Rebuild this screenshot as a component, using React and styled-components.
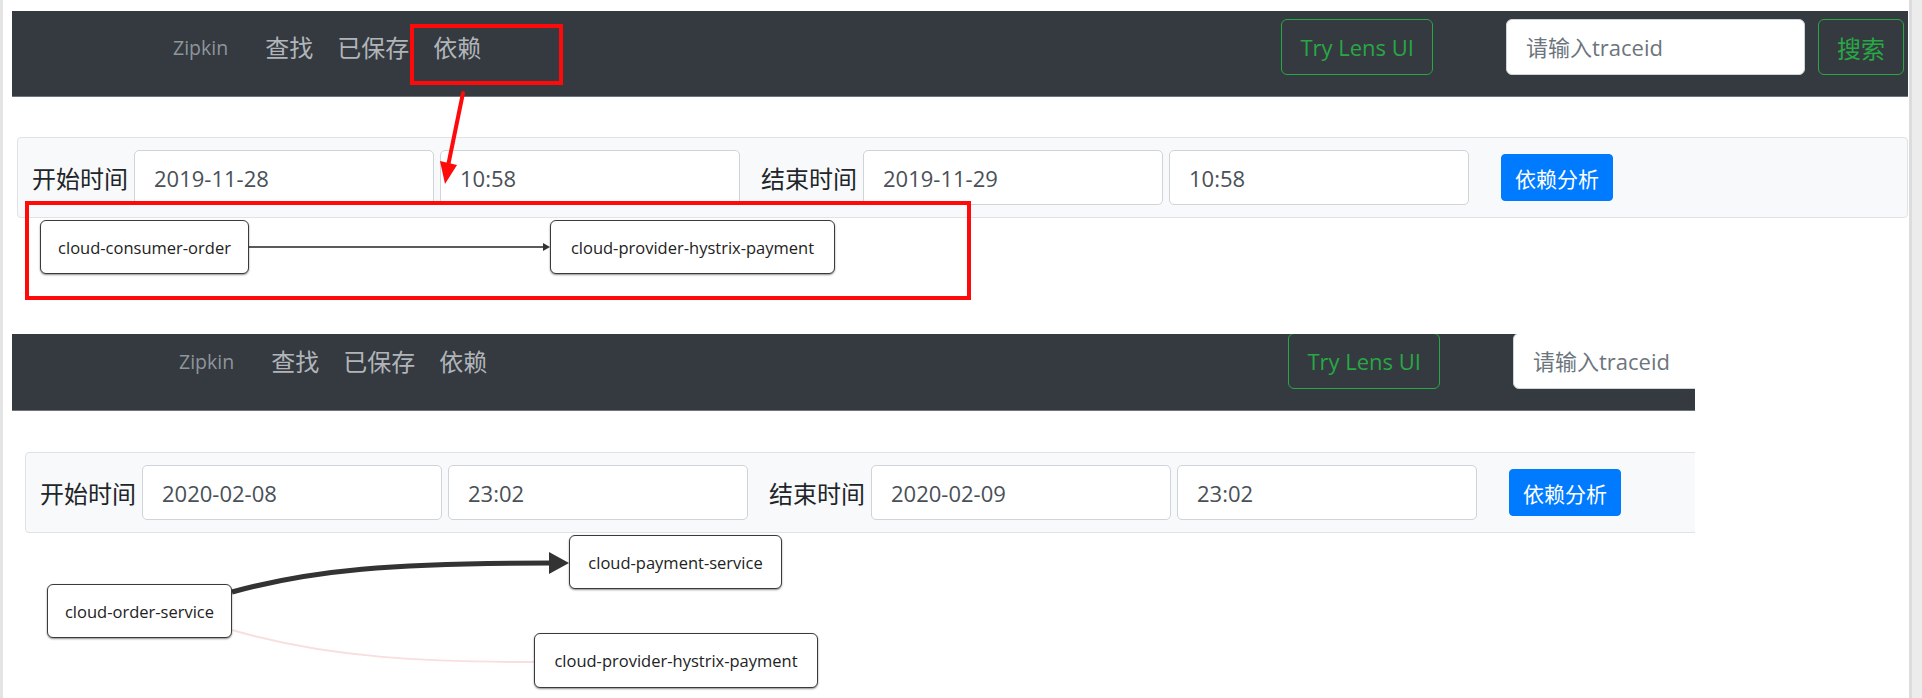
import React from 'react';
import styled, { createGlobalStyle } from 'styled-components';

const GlobalStyle = createGlobalStyle`
  html, body { margin: 0; padding: 0; background: #fff; }
  body { font-family: "Open Sans", "Noto Sans CJK SC", sans-serif; overflow: hidden; }
  *, *::before, *::after { box-sizing: border-box; }
`;

const Page = styled.div`
  position: relative;
  display: flex;
  width: 1922px;
  height: 698px;
  overflow: hidden;
  background: #fff;
`;

const Main = styled.main`
  flex: 0 0 1909px;
  display: flex;
  flex-direction: column;
  border-left: 3px solid #e4e4e4;
`;

const ScrollStrip = styled.div`
  flex: 1;
  background: #ececec;
  border-left: 3px solid #dcdcdc;
`;

const Capture = styled.section`
  display: flex;
  flex-direction: column;
  flex-shrink: 0;
  overflow: hidden;
  width: ${p => p.$width}px;
  padding: ${p => p.$pad};
  margin-left: ${p => p.$ml || 0}px;
`;

const Navbar = styled.nav`
  flex-shrink: 0;
  display: flex;
  align-items: center;
  width: ${p => p.$width}px;
  height: 86px;
  margin-top: ${p => -(p.$cropTop || 0)}px;
  padding: 8px 4px 21px ${p => p.$padLeft}px;
  background: #343a40;
  border-bottom: 1px solid #6c757d;
`;

const Brand = styled.a`
  margin-right: 37px;
  font-family: "Open Sans", sans-serif;
  font-size: 19.5px;
  color: #8e959c;
  text-decoration: none;
`;

const NavLinks = styled.div`
  display: flex;
  gap: 24px;
`;

const NavLink = styled.a`
  font-family: "Noto Sans CJK SC", sans-serif;
  font-size: 24px;
  line-height: 1;
  color: #b1b5b9;
  text-decoration: none;
`;

const RightGroup = styled.div`
  display: flex;
  align-items: center;
  margin-left: auto;
`;

const OutlineButton = styled.button`
  height: 56px;
  margin-right: ${p => p.$mr || 0}px;
  padding: 0 18px;
  background: transparent;
  border: 1.5px solid #28a745;
  border-radius: 6px;
  color: #28a745;
  font-family: "Open Sans", "Noto Sans CJK SC", sans-serif;
  font-size: ${p => p.$fs || 22}px;
  white-space: nowrap;
`;

const SearchInput = styled.input`
  width: 299px;
  height: 56px;
  margin-right: 13px;
  padding: 0 0 0 19px;
  background: #fff;
  border: 1px solid #ced4da;
  border-radius: 6px;
  font-family: "Open Sans", "Noto Sans CJK SC", sans-serif;
  font-size: 22px;
  color: #495057;
  &::placeholder { color: #6c757d; }
`;

const FilterPanel = styled.form`
  flex-shrink: 0;
  display: flex;
  align-items: center;
  width: 1891px;
  margin: ${p => p.$mt}px 0 0 ${p => p.$ml}px;
  padding: 12px 14px;
  background: #f8f9fa;
  border: 1px solid #dfe2e6;
  border-radius: 4px;
`;

const FieldGroup = styled.div`
  display: flex;
  align-items: center;
  gap: 6px;
  margin-right: ${p => p.$mr || 0}px;
`;

const FieldLabel = styled.label`
  font-family: "Noto Sans CJK SC", sans-serif;
  font-size: 24px;
  color: #212529;
  white-space: nowrap;
`;

const TextInput = styled.input`
  width: 300px;
  height: 55px;
  padding: 0 0 0 19px;
  background: #fff;
  border: 1px solid #ced4da;
  border-radius: 5px;
  font-family: "Open Sans", sans-serif;
  font-size: 22px;
  color: #495057;
`;

const PrimaryButton = styled.button`
  width: 112px;
  height: 47px;
  margin-left: 10px;
  padding: 0;
  background: #007bff;
  border: 1px solid #007bff;
  border-radius: 4px;
  color: #fff;
  font-family: "Noto Sans CJK SC", sans-serif;
  font-size: 21px;
`;

const Canvas = styled.div`
  position: relative;
  flex-shrink: 0;
  height: ${p => p.$h}px;
`;

const EdgeLayer = styled.svg`
  position: absolute;
  left: 0;
  top: 0;
  overflow: visible;
`;

const ServiceNode = styled.div`
  position: absolute;
  left: ${p => p.$x}px;
  top: ${p => p.$y}px;
  width: ${p => p.$w}px;
  height: ${p => p.$h}px;
  display: flex;
  align-items: center;
  justify-content: center;
  background: #fff;
  border: 1px solid #3a3a3a;
  border-radius: 6px;
  box-shadow: 0 1px 2px rgba(0, 0, 0, 0.45);
  font-family: "Open Sans", sans-serif;
  font-size: 16.5px;
  color: #222;
  white-space: nowrap;
`;

const RedBox = styled.div`
  position: absolute;
  left: ${p => p.$x}px;
  top: ${p => p.$y}px;
  width: ${p => p.$w}px;
  height: ${p => p.$h}px;
  border: 4px solid #ff0a0a;
  pointer-events: none;
`;

const AnnotationLayer = styled.svg`
  position: absolute;
  left: 0;
  top: 0;
  pointer-events: none;
`;

function TopNav({ width, padLeft, cropTop }) {
  return (
    <Navbar $width={width} $padLeft={padLeft} $cropTop={cropTop}>
      <Brand>Zipkin</Brand>
      <NavLinks>
        <NavLink>查找</NavLink>
        <NavLink>已保存</NavLink>
        <NavLink>依赖</NavLink>
      </NavLinks>
      <RightGroup>
        <OutlineButton type="button" $mr={73}>Try Lens UI</OutlineButton>
        <SearchInput placeholder="请输入traceid" readOnly />
        <OutlineButton type="button" $fs={24}>搜索</OutlineButton>
      </RightGroup>
    </Navbar>
  );
}

function Filters({ mt, ml, startDate, startTime, endDate, endTime }) {
  return (
    <FilterPanel $mt={mt} $ml={ml} onSubmit={e => e.preventDefault()}>
      <FieldGroup $mr={21}>
        <FieldLabel>开始时间</FieldLabel>
        <TextInput value={startDate} readOnly />
        <TextInput value={startTime} readOnly />
      </FieldGroup>
      <FieldGroup $mr={22}>
        <FieldLabel>结束时间</FieldLabel>
        <TextInput value={endDate} readOnly />
        <TextInput value={endTime} readOnly />
      </FieldGroup>
      <PrimaryButton type="button">依赖分析</PrimaryButton>
    </FilterPanel>
  );
}

export default function App() {
  return (
    <>
      <GlobalStyle />
      <Page>
        <Main>
          <Capture $width={1906} $pad="11px 1px 0 9px">
            <TopNav width={1896} padLeft={161} />
            <Filters mt={40} ml={5} startDate="2019-11-28" startTime="10:58" endDate="2019-11-29" endTime="10:58" />
            <Canvas $h={116}>
              <EdgeLayer width="900" height="116">
                <path d="M237 29 L533 29" stroke="#5a5a5a" strokeWidth="2" fill="none" />
                <polygon points="531,25 538,29 531,33" fill="#333" />
              </EdgeLayer>
              <ServiceNode $x={28} $y={2} $w={209} $h={54}>cloud-consumer-order</ServiceNode>
              <ServiceNode $x={538} $y={2} $w={285} $h={54}>cloud-provider-hystrix-payment</ServiceNode>
            </Canvas>
          </Capture>
          <Capture $width={1683} $pad="0" $ml={9}>
            <TopNav width={1903} padLeft={167} cropTop={9} />
            <Filters mt={41} ml={13} startDate="2020-02-08" startTime="23:02" endDate="2020-02-09" endTime="23:02" />
            <Canvas $h={170}>
              <EdgeLayer width="900" height="170">
                <path d="M220 97 C320 126 420 129 522 129" stroke="#f9dede" strokeWidth="2" fill="none" />
                <path d="M220 59 C300 37 380 30 539 30" stroke="#333" strokeWidth="5" fill="none" />
                <polygon points="537,19 557,30 537,41" fill="#333" />
              </EdgeLayer>
              <ServiceNode $x={557} $y={2} $w={213} $h={54}>cloud-payment-service</ServiceNode>
              <ServiceNode $x={35} $y={51} $w={185} $h={54}>cloud-order-service</ServiceNode>
              <ServiceNode $x={522} $y={100} $w={284} $h={55}>cloud-provider-hystrix-payment</ServiceNode>
            </Canvas>
          </Capture>
        </Main>
        <ScrollStrip />
        <RedBox $x={410} $y={24} $w={153} $h={61} />
        <RedBox $x={25} $y={201} $w={946} $h={99} />
        <AnnotationLayer width="1922" height="698">
          <line x1="463" y1="93" x2="448" y2="166" stroke="#ff0a0a" strokeWidth="4" strokeLinecap="round" />
          <polygon points="440,161 457,165 445,184" fill="#ff0a0a" />
        </AnnotationLayer>
      </Page>
    </>
  );
}
